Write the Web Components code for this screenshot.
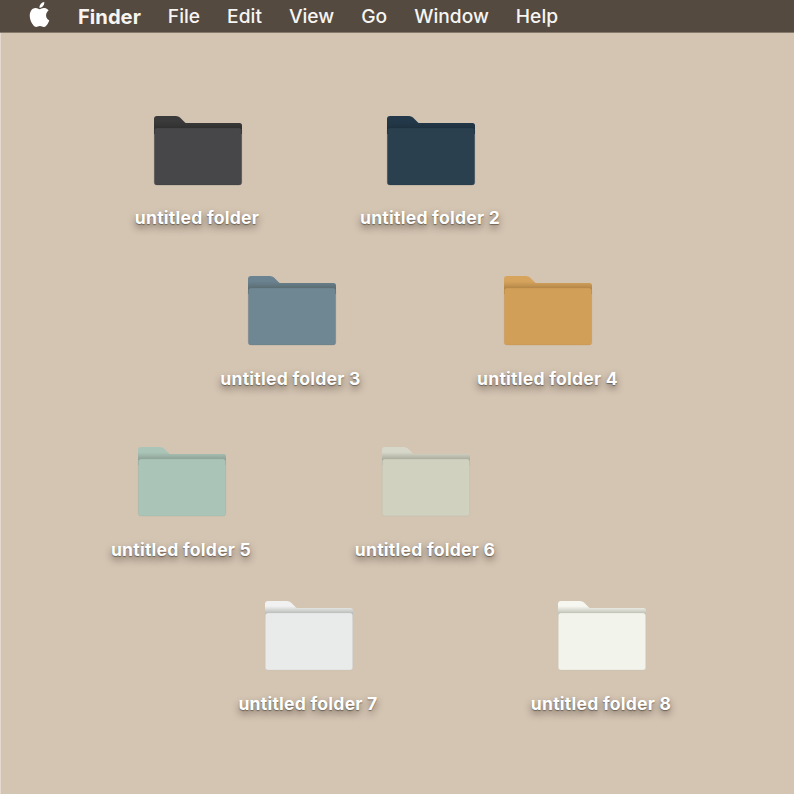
<!DOCTYPE html>
<html>
<head>
<meta charset="utf-8">
<style>
  html, body { margin: 0; height: 100%; background: #d4c4b2; overflow: hidden; }
  body { font-family: 'Inter', 'Liberation Sans', sans-serif; }
</style>
</head>
<body>
<mac-desktop>
  <mac-menubar slot="bar">
    <b>Finder</b>
    <span>File</span>
    <span>Edit</span>
    <span>View</span>
    <span>Go</span>
    <span>Window</span>
    <span>Help</span>
  </mac-menubar>
  <desktop-icon x="154" y="116" cx="197" ly="92" back="#3b3a3b" front="#474648" line="#303031">untitled folder</desktop-icon>
  <desktop-icon x="387" y="116" cx="430" ly="92" back="#23394a" front="#2a404e" line="#1f313e">untitled folder 2</desktop-icon>
  <desktop-icon x="248" y="276" cx="290.5" back="#6b8390" front="#6f8792" line="#5a6b71">untitled folder 3</desktop-icon>
  <desktop-icon x="504" y="276" cx="547.5" back="#d7a45e" front="#d29f58" line="#b08445">untitled folder 4</desktop-icon>
  <desktop-icon x="138" y="447" cx="181" back="#aac5b8" front="#aac4b7" line="#8d9f95">untitled folder 5</desktop-icon>
  <desktop-icon x="382" y="447" cx="425" back="#d6d7c8" front="#d1d1c0" line="#a8a89a">untitled folder 6</desktop-icon>
  <desktop-icon x="265" y="601" cx="308" back="#f0f1f0" front="#e9ebeb" line="#b6b8b5">untitled folder 7</desktop-icon>
  <desktop-icon x="558" y="601" cx="601" back="#f6f7f0" front="#f2f3ea" line="#bdbdb2">untitled folder 8</desktop-icon>
</mac-desktop>

<script>
class MacDesktop extends HTMLElement {
  constructor() {
    super();
    this.attachShadow({ mode: 'open' });
    this.shadowRoot.innerHTML = `
      <style>
        :host {
          display: block;
          position: relative;
          width: 794px;
          height: 794px;
          background: #d4c4b2;
          overflow: hidden;
        }
        .edge {
          position: absolute;
          left: 0; top: 0; bottom: 0;
          width: 1px;
          background: #e4d9cc;
        }
      </style>
      <slot name="bar"></slot>
      <div class="edge"></div>
      <slot></slot>
    `;
  }
}

class MacMenubar extends HTMLElement {
  constructor() {
    super();
    this.attachShadow({ mode: 'open' });
    this.shadowRoot.innerHTML = `
      <style>
        :host {
          display: flex;
          align-items: center;
          box-sizing: border-box;
          height: 33px;
          padding: 0 0 0 29px;
          background: #544a40;
          border-bottom: 1px solid #85796c;
          color: #f7f5f2;
          font: 500 19.2px 'Inter', 'Liberation Sans', sans-serif;
          position: relative;
          z-index: 1;
        }
        svg { width: 21px; height: 25px; margin-right: 28px; margin-top: -3px; fill: #fff; }
        .items { display: flex; gap: 27px; align-items: center; }
        ::slotted(b) { font-weight: 700; font-size: 20.2px; }
      </style>
      <svg viewBox="1.5 0 21 24" preserveAspectRatio="none"><path d="M12.152 6.896c-.948 0-2.415-1.078-3.96-1.04-2.04.027-3.91 1.183-4.961 3.014-2.117 3.675-.546 9.103 1.519 12.09 1.013 1.454 2.208 3.09 3.792 3.039 1.52-.065 2.09-.987 3.935-.987 1.831 0 2.35.987 3.96.948 1.637-.026 2.676-1.48 3.676-2.948 1.156-1.688 1.636-3.325 1.662-3.415-.039-.013-3.182-1.221-3.22-4.857-.026-3.04 2.48-4.494 2.597-4.559-1.429-2.09-3.623-2.324-4.39-2.376-2-.156-3.675 1.09-4.61 1.09zM15.53 3.83c.843-1.012 1.4-2.427 1.245-3.83-1.207.052-2.662.805-3.532 1.818-.78.896-1.454 2.338-1.273 3.714 1.338.104 2.715-.688 3.559-1.701"/></svg>
      <div class="items"><slot></slot></div>
    `;
  }
}

class DesktopIcon extends HTMLElement {
  constructor() {
    super();
    this.attachShadow({ mode: 'open' });
    this.shadowRoot.innerHTML = `
      <style>
        :host { display: block; position: absolute; width: 0; height: 0; }
        svg {
          position: absolute;
          left: 0; top: 0;
          width: 88px;
          height: 70px;
          overflow: visible;
          filter: blur(.35px);
        }
        .label {
          position: absolute;
          top: 93px;
          width: 200px;
          text-align: center;
          white-space: nowrap;
          color: #fff;
          font: 700 17.6px/20px 'Inter', 'Liberation Sans', sans-serif;
          letter-spacing: .22px;
          text-shadow: 0 1px 1px rgba(60,50,40,.55), 0 4px 7px rgba(60,50,40,.6);
        }
      </style>
      <svg viewBox="0 0 88 70">
        <defs>
          <linearGradient id="tab" gradientUnits="userSpaceOnUse" x1="0" y1="0" x2="0" y2="13">
            <stop class="s1" offset="0"/>
            <stop class="s2" offset=".4"/>
            <stop class="s3" offset="1"/>
          </linearGradient>
        </defs>
        <path d="M0 3Q0 0 3 0H22Q24.500 0 26 1.500L31 6.500Q31.500 7 33 7H85.500Q88 7 88 9.500V18H0Z" fill="url(#tab)"/>
        <path class="front" stroke-opacity=".35" stroke-width=".6" d="M.3 14.500Q.3 12 3 12H85Q87.700 12 87.700 14.500V66.500Q87.700 69 85 69H3Q.3 69 .3 66.500Z"/>
      </svg>
      <div class="label"><slot></slot></div>
    `;
  }

  connectedCallback() {
    const x = +this.getAttribute('x');
    this.style.left = x + 'px';
    this.style.top = this.getAttribute('y') + 'px';
    const root = this.shadowRoot;
    const back = this.getAttribute('back');
    const line = this.getAttribute('line');
    root.querySelector('.s1').setAttribute('stop-color', back);
    root.querySelector('.s2').setAttribute('stop-color', back);
    root.querySelector('.s3').setAttribute('stop-color', line);
    const front = root.querySelector('.front');
    front.setAttribute('fill', this.getAttribute('front'));
    front.setAttribute('stroke', line);
    // label is centred on cx, which is not always the middle of the folder
    const label = root.querySelector('.label');
    label.style.left = (+this.getAttribute('cx') - x - 100) + 'px';
    if (this.hasAttribute('ly')) label.style.top = this.getAttribute('ly') + 'px';
  }
}

customElements.define('mac-desktop', MacDesktop);
customElements.define('mac-menubar', MacMenubar);
customElements.define('desktop-icon', DesktopIcon);
</script>
</body>
</html>
